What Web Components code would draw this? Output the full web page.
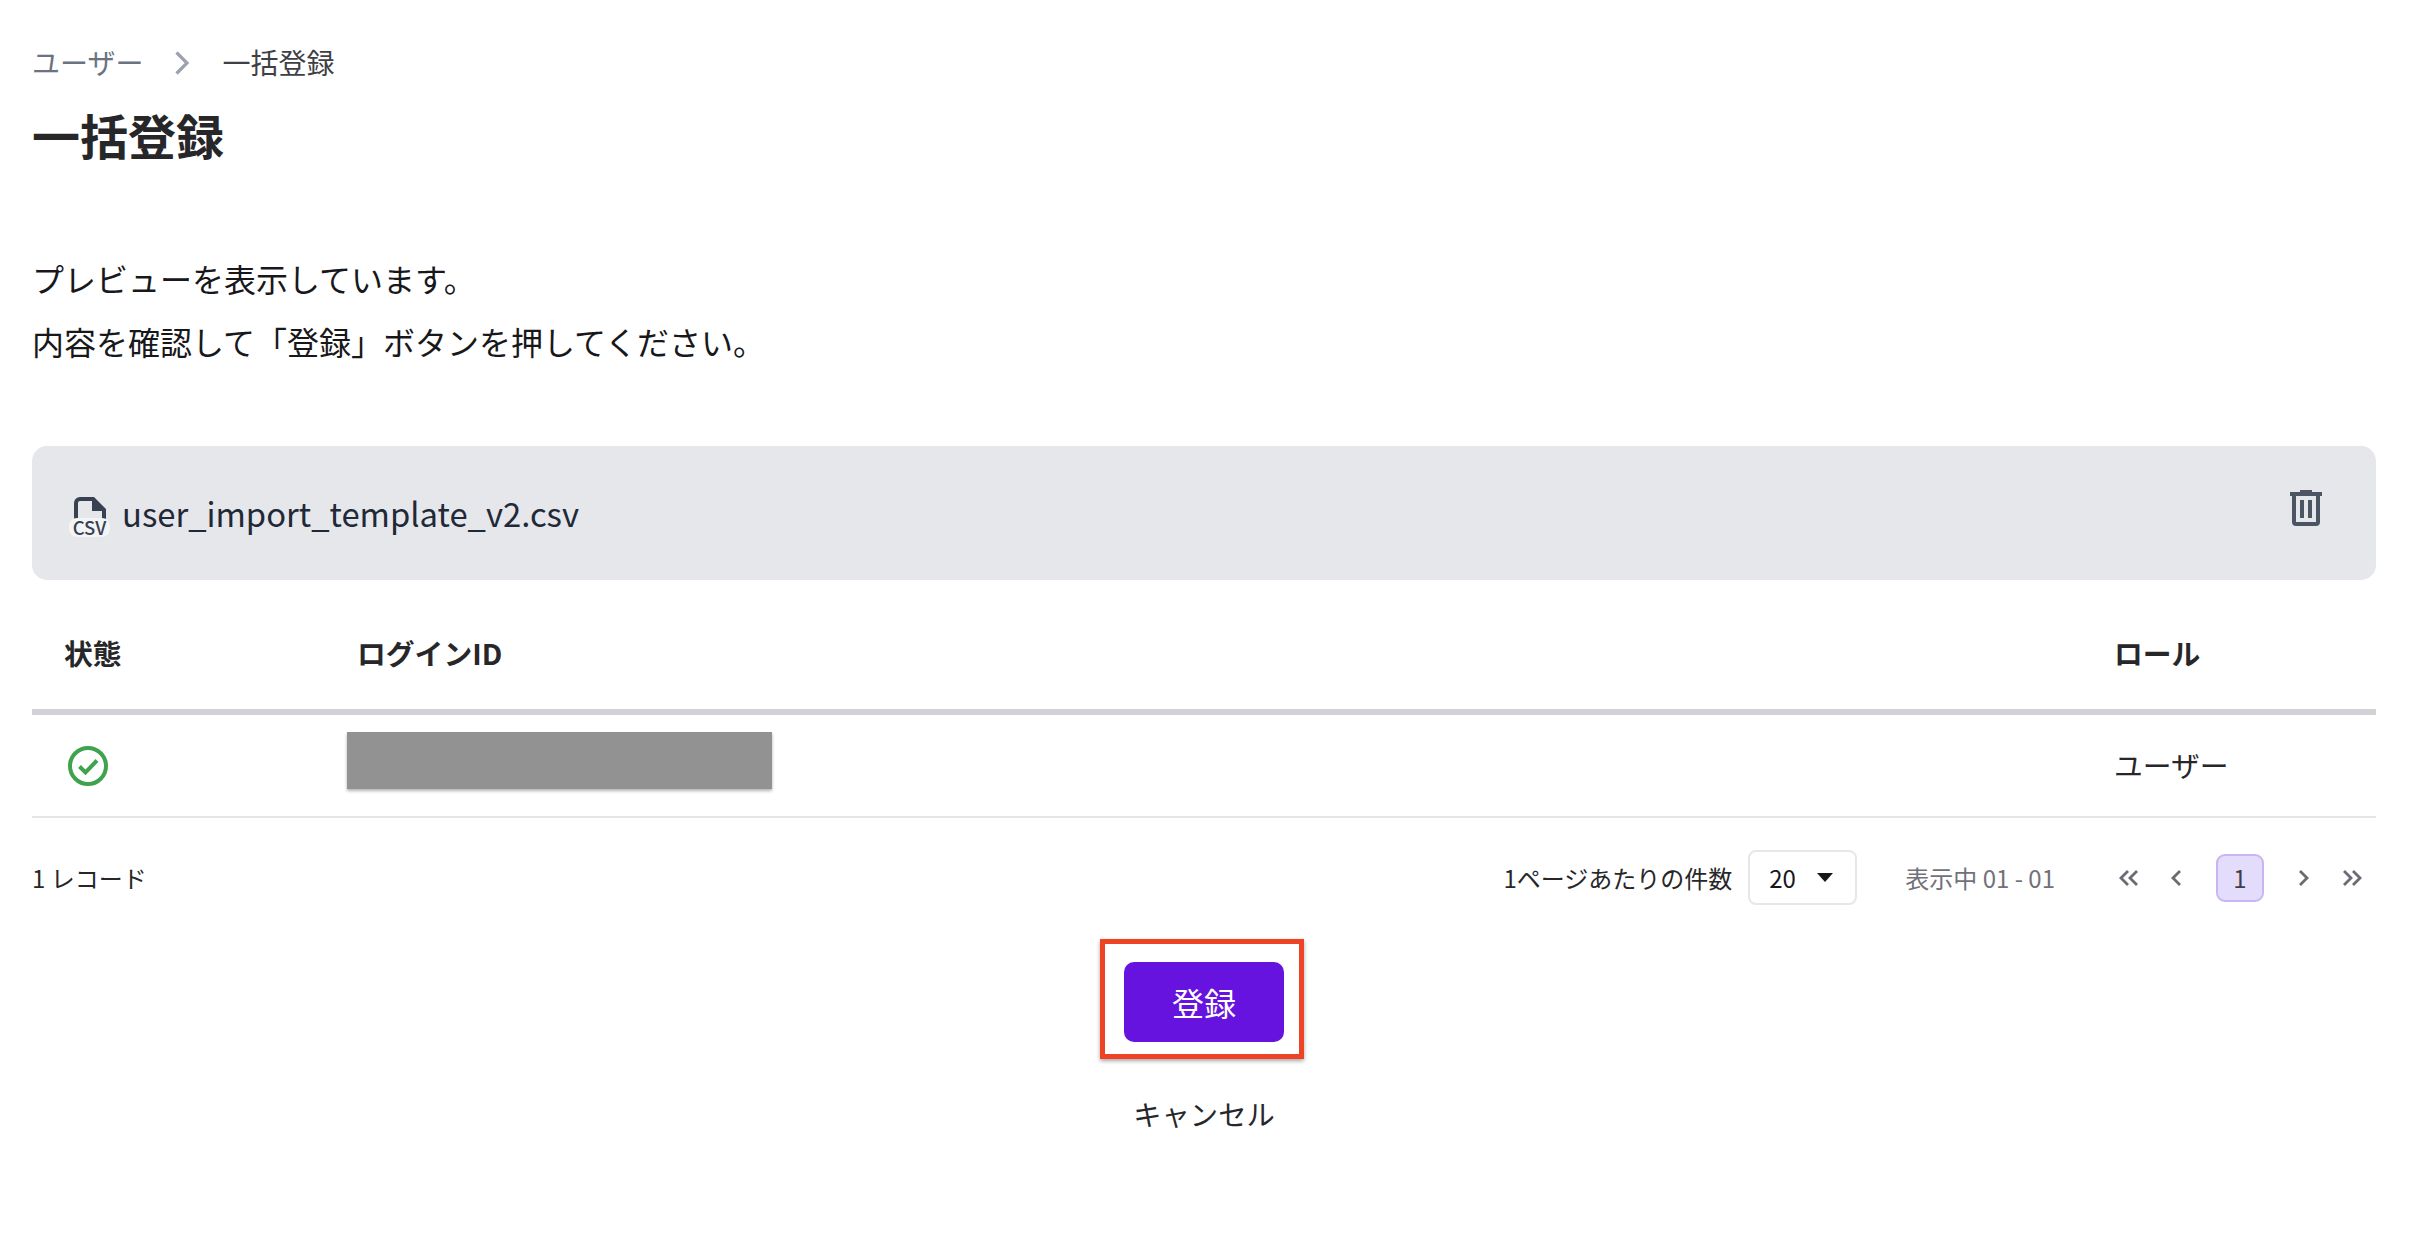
<!DOCTYPE html>
<html lang="ja">
<head>
<meta charset="utf-8">
<title>一括登録</title>
<style>
html, body { margin: 0; background: #fff; }
body { font-family: "Noto Sans CJK JP", "Noto Sans", sans-serif; color: #27272a; }
</style>
</head>
<body>
<bulk-page>
  <app-breadcrumb parent="ユーザー" current="一括登録"></app-breadcrumb>
  <page-title>一括登録</page-title>
  <page-message>
    <div>プレビューを表示しています。</div>
    <div>内容を確認して「登録」ボタンを押してください。</div>
  </page-message>
  <file-bar name="user_import_template_v2.csv"></file-bar>
  <preview-table></preview-table>
  <table-footer total="1 レコード" per-page="20" range="表示中 01 - 01" page="1"></table-footer>
  <form-actions submit="登録" cancel="キャンセル"></form-actions>
</bulk-page>

<script>
const define = (name, html) => {
  customElements.define(name, class extends HTMLElement {
    constructor() {
      super();
      const attr = k => this.getAttribute(k) || '';
      this.attachShadow({ mode: 'open' }).innerHTML = html(attr);
    }
  });
};

define('bulk-page', () => `
<style>
:host { display: flex; flex-direction: column; padding: 42px 34px 0 32px; }
</style>
<slot></slot>`);

define('app-breadcrumb', a => `
<style>
:host { display: flex; align-items: center; height: 40px; font-size: 28px; line-height: 40px; color: #3f3f46; }
.parent { color: #6b7280; }
svg { display: block; margin: 2px 32px 0 31px; }
</style>
<span class="parent">${a('parent')}</span>
<svg width="16" height="24" viewBox="0 0 16 24" fill="none" stroke="#9ca3af" stroke-width="3.2"><path d="M2.5 1.5 13 12 2.5 22.5"/></svg>
<span>${a('current')}</span>`);

define('page-title', () => `
<style>
:host { display: block; margin-top: 22px; font-size: 48px; line-height: 60px; font-weight: 700; color: #27272a; }
</style>
<slot></slot>`);

define('page-message', () => `
<style>
:host { display: block; margin-top: 83px; font-size: 32px; line-height: 63px; color: #18181b; }
</style>
<slot></slot>`);

define('file-bar', a => `
<style>
:host { display: flex; align-items: center; height: 134px; margin-top: 73px; padding: 0 54px 0 37px; background: #e5e7eb; border-radius: 15px; }
.icon { position: relative; width: 42px; height: 46px; margin-top: 14px; }
.icon svg { display: block; position: absolute; left: 5px; top: 0; }
.badge { position: absolute; left: 0; top: 21px; width: 41px; height: 19px; border-radius: 8px; background: #f3f4f6; color: #374151; font-size: 18.5px; font-weight: 500; line-height: 19px; text-align: center; }
.name { flex: 1; margin-left: 11px; font-size: 32.8px; line-height: 44px; color: #1f2937; }
.trash { display: block; margin-top: -10px; }
</style>
<div class="icon">
  <svg width="32" height="26" viewBox="0 0 32 26"><path d="M6 0H20L32 12V26H0V6A6 6 0 0 1 6 0ZM4 24H28V14H18V4H6A2 2 0 0 0 4 6Z" fill="#374151"/></svg>
  <span class="badge">CSV</span>
</div>
<span class="name">${a('name')}</span>
<svg class="trash" width="32" height="36" viewBox="0 0 32 36" fill="#4b5563"><path d="M10 0H22V2H32V6H30V32A4 4 0 0 1 26 36H6A4 4 0 0 1 2 32V6H0V2H10ZM6 6V32H26V6ZM10 10H14V28H10ZM18 10H22V28H18Z" fill-rule="evenodd"/></svg>`);

define('preview-table', () => `
<style>
:host { display: block; font-size: 28.8px; color: #27272a; }
.row { display: grid; grid-template-columns: 293px 1fr 294px; }
.head { height: 135px; box-sizing: border-box; padding-top: 48px; border-bottom: 6px solid #d1d1d6; line-height: 50px; font-weight: 700; }
.body { height: 103px; box-sizing: border-box; border-bottom: 2px solid #e5e5e5; }
.cell { padding-left: 32px; }
.body .cell { line-height: 40px; padding-top: 30px; }
.body .status { padding-top: 31px; }
.status svg { display: block; margin-left: 4px; }
.body .login { padding: 17px 0 0 22px; }
.mask { width: 425px; height: 57px; background: #929292; box-shadow: 0 2px 3px rgba(0, 0, 0, .3); }
</style>
<div class="row head">
  <div class="cell">状態</div>
  <div class="cell">ログインID</div>
  <div class="cell">ロール</div>
</div>
<div class="row body">
  <div class="cell status">
    <svg width="40" height="40" viewBox="0 0 40 40" fill="none" stroke="#3fa34d" stroke-width="4"><circle cx="20" cy="20" r="18"/><path d="M11.5 20.5 17.5 26.5 29 14.5"/></svg>
  </div>
  <div class="cell login"><div class="mask"></div></div>
  <div class="cell">ユーザー</div>
</div>`);

const chev = (d) => `<span class="nav"><svg width="24" height="20" viewBox="0 0 24 20" fill="none" stroke="#6b6b73" stroke-width="2.8"><path d="${d}"/></svg></span>`;

define('table-footer', a => `
<style>
:host { display: flex; align-items: center; height: 55px; margin-top: 32px; font-size: 24px; line-height: 36px; color: #27272a; }
.total { flex: 1; }
.select { display: flex; align-items: center; box-sizing: border-box; width: 109px; height: 55px; margin-left: 16px; padding-left: 19px; border: 2px solid #e5e7eb; border-radius: 8px; color: #18181b; }
.select i { display: block; width: 0; height: 0; margin: 0 0 0 21px; border: 8px solid transparent; border-top: 9px solid #18181b; border-bottom: 0; }
.range { margin: 0 49px 0 48px; color: #71717a; }
.nav { display: flex; justify-content: center; width: 48px; }
.current { box-sizing: border-box; width: 48px; height: 48px; margin: 0 16px; border: 2px solid #c9b5f0; border-radius: 9px; background: #e4dcfb; text-align: center; line-height: 44px; color: #3f3f46; }
</style>
<span class="total">${a('total')}</span>
<span>1ページあたりの件数</span>
<div class="select"><span>${a('per-page')}</span><i></i></div>
<span class="range">${a('range')}</span>
${chev('M12 3 5 10 12 17M21 3 14 10 21 17')}
${chev('M16 3 9 10 16 17')}
<span class="current">${a('page')}</span>
${chev('M8 3 15 10 8 17')}
${chev('M4 3 11 10 4 17M13 3 20 10 13 17')}`);

define('form-actions', a => `
<style>
:host { display: flex; flex-direction: column; align-items: center; margin-top: 57px; }
.wrap { position: relative; }
button { display: block; width: 160px; height: 80px; padding: 0; border: 0; border-radius: 10px; background: #6613df; color: #fff; font: inherit; font-size: 32px; }
.mark { position: absolute; left: -24px; right: -20px; top: -23px; bottom: -17px; border: 5px solid #ee4426; box-shadow: 0 2px 4px rgba(0, 0, 0, .35); }
.cancel { margin-top: 52px; font-size: 28.3px; line-height: 40px; color: #27272a; }
</style>
<div class="wrap"><button>${a('submit')}</button><div class="mark"></div></div>
<span class="cancel">${a('cancel')}</span>`);
</script>
</body>
</html>
